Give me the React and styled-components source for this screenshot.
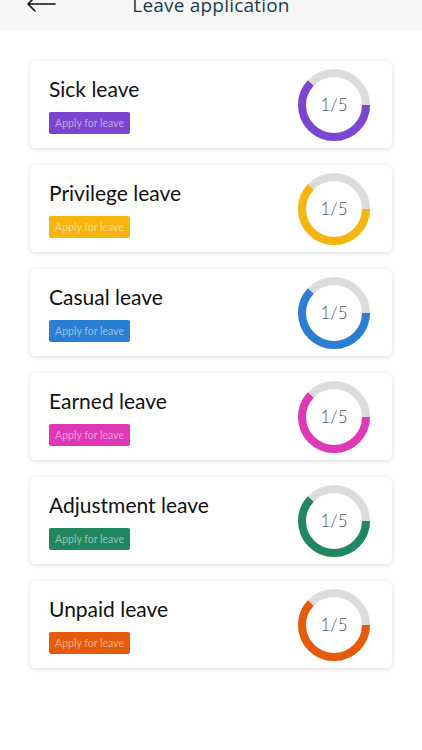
import React from 'react';
import styled, { createGlobalStyle } from 'styled-components';

const GlobalStyle = createGlobalStyle`
  html, body {
    margin: 0;
    padding: 0;
    background: #fff;
  }
  body {
    font-family: Lato, 'Open Sans', sans-serif;
  }
`;

const leaves = [
  { id: 'sick', name: 'Sick leave', color: '#7b45cf', used: 1, total: 5 },
  { id: 'privilege', name: 'Privilege leave', color: '#f6b50e', used: 1, total: 5 },
  { id: 'casual', name: 'Casual leave', color: '#2a7fd2', used: 1, total: 5 },
  { id: 'earned', name: 'Earned leave', color: '#df37b6', used: 1, total: 5 },
  { id: 'adjustment', name: 'Adjustment leave', color: '#218760', used: 1, total: 5 },
  { id: 'unpaid', name: 'Unpaid leave', color: '#e65a0b', used: 1, total: 5 },
];

const Page = styled.div({
  width: '422px',
  minHeight: '750px',
  overflow: 'hidden',
});

// the app bar is partly scrolled out of view in the screenshot
const Header = styled.header({
  height: '50px',
  marginTop: '-20px',
  background: '#f6f6f6',
  display: 'flex',
  alignItems: 'center',
  justifyContent: 'center',
  position: 'relative',
});

const BackButton = styled.button({
  position: 'absolute',
  left: '26px',
  top: '16px',
  border: 'none',
  background: 'none',
  padding: 0,
  display: 'flex',
});

const Title = styled.h1({
  margin: 0,
  fontFamily: "'Open Sans', sans-serif",
  fontWeight: 400,
  fontSize: '19px',
  color: '#1e3b4b',
  letterSpacing: '0.2px',
});

const List = styled.div({
  display: 'flex',
  flexDirection: 'column',
  gap: '17px',
  padding: '31px 30px 0',
});

const Card = styled.div({
  height: '87px',
  boxSizing: 'border-box',
  background: '#fff',
  borderRadius: '5px',
  boxShadow: '0 1px 4px rgba(0, 0, 0, 0.16)',
  display: 'flex',
  alignItems: 'center',
  justifyContent: 'space-between',
  padding: '0 22px 0 19px',
});

const Info = styled.div({
  display: 'flex',
  flexDirection: 'column',
  alignItems: 'flex-start',
  gap: '10px',
});

const LeaveName = styled.div({
  fontFamily: 'Lato, sans-serif',
  fontSize: '21px',
  lineHeight: '26px',
  color: '#111',
});

const ApplyButton = styled.button`
  width: 81px;
  height: 22px;
  border: none;
  border-radius: 2px;
  padding: 0;
  background: ${(p) => p.$color};
  color: rgba(255, 255, 255, 0.5);
  font-family: Lato, sans-serif;
  font-size: 10.5px;
  cursor: pointer;
`;

const RingWrap = styled.div({
  width: '72px',
  height: '72px',
  position: 'relative',
  display: 'flex',
  alignItems: 'center',
  justifyContent: 'center',
});

const RingSvg = styled.svg({
  position: 'absolute',
  inset: 0,
});

const RingLabel = styled.span({
  position: 'relative',
  fontFamily: 'Lato, sans-serif',
  fontWeight: 300,
  fontSize: '17px',
  color: '#555',
});

const Ring = ({ color, used, total }) => {
  const r = 32;
  const c = 2 * Math.PI * r;
  const filled = c * 0.62;
  return (
    <RingWrap>
      <RingSvg width="72" height="72" viewBox="0 0 72 72">
        <circle cx="36" cy="36" r={r} fill="none" stroke="#dcdcdc" strokeWidth="8" />
        <circle
          cx="36"
          cy="36"
          r={r}
          fill="none"
          stroke={color}
          strokeWidth="8"
          strokeDasharray={`${filled} ${c}`}
        />
      </RingSvg>
      <RingLabel>{used}/{total}</RingLabel>
    </RingWrap>
  );
};

const App = () => {
  return (
    <Page>
      <GlobalStyle />
      <Header>
        <BackButton aria-label="Back">
          <svg width="30" height="16" viewBox="0 0 30 16">
            <path d="M29 8 H2 M9 1 L2 8 L9 15" fill="none" stroke="#111" strokeWidth="1.6" strokeLinecap="round" strokeLinejoin="round" />
          </svg>
        </BackButton>
        <Title>Leave application</Title>
      </Header>

      <List>
        {leaves.map((leave) => (
          <Card key={leave.id}>
            <Info>
              <LeaveName>{leave.name}</LeaveName>
              <ApplyButton $color={leave.color}>Apply for leave</ApplyButton>
            </Info>
            <Ring color={leave.color} used={leave.used} total={leave.total} />
          </Card>
        ))}
      </List>
    </Page>
  );
};

export default App;
